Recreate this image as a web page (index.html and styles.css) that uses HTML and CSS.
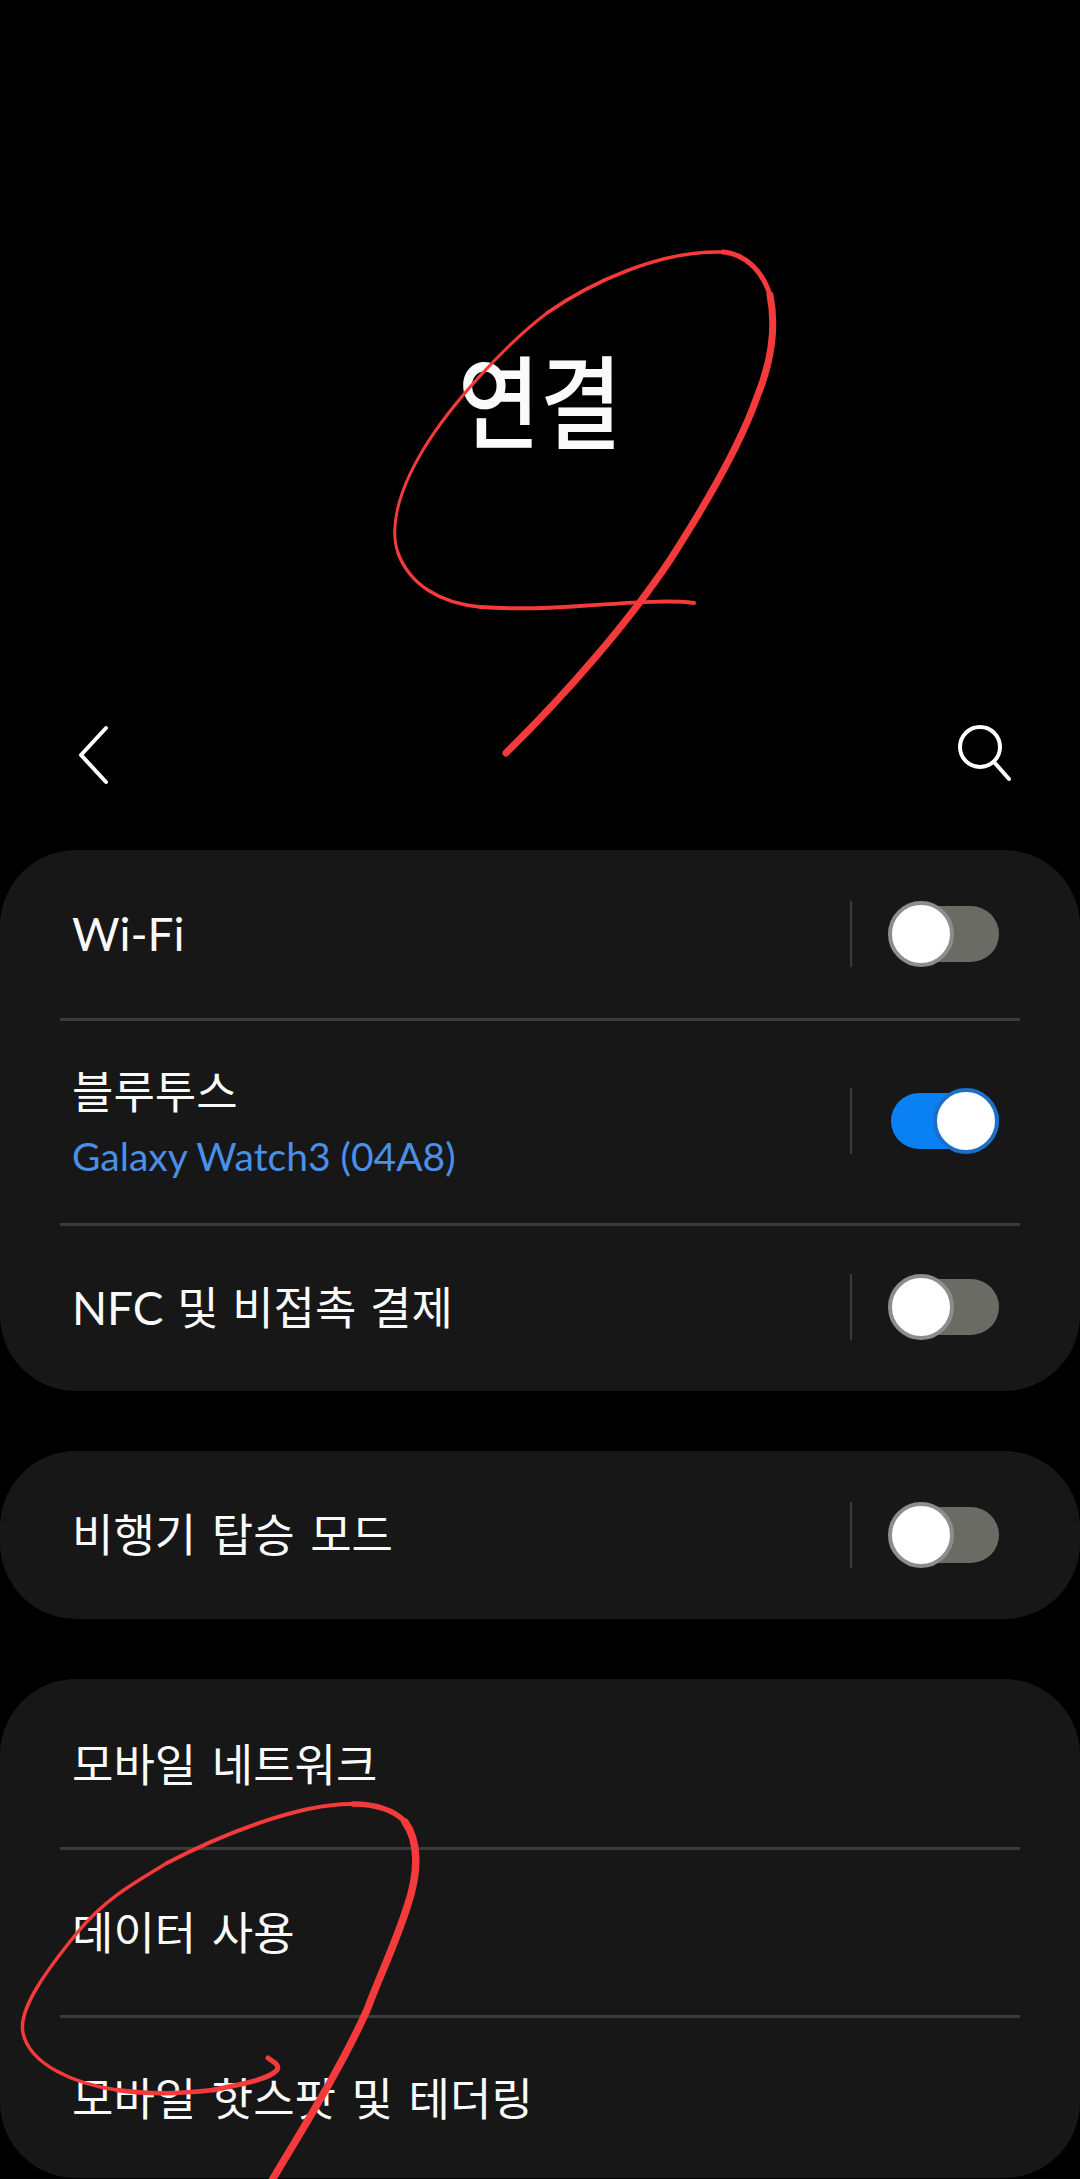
FILE: index.html
```html
<!DOCTYPE html>
<html lang="ko">
<head>
  <meta charset="UTF-8">
  <title>연결</title>
  <link rel="stylesheet" href="styles.css">
</head>
<body>
  <div class="screen">
    <header class="hero">
      <h1>연결</h1>
    </header>

    <nav class="toolbar">
      <svg class="icon" width="40" height="70" viewBox="0 0 40 70">
        <path d="M36 10 L11 37 L36 64" />
      </svg>
      <svg class="icon" width="66" height="66" viewBox="0 0 66 66">
        <circle cx="31" cy="27" r="20" />
        <path d="M45 42 L60 59" />
      </svg>
    </nav>

    <section class="card">
      <div class="row row-first">
        <span class="label latin">Wi-Fi</span>
        <span class="sep"></span>
        <span class="switch"><span class="thumb"></span></span>
      </div>
      <div class="row row-double">
        <div>
          <div class="label">블루투스</div>
          <div class="sub">Galaxy Watch3 (04A8)</div>
        </div>
        <span class="sep"></span>
        <span class="switch on"><span class="thumb"></span></span>
      </div>
      <div class="row row-last">
        <span class="label"><span class="latin">NFC</span> 및 비접촉 결제</span>
        <span class="sep"></span>
        <span class="switch"><span class="thumb"></span></span>
      </div>
    </section>

    <section class="card">
      <div class="row row-single">
        <span class="label">비행기 탑승 모드</span>
        <span class="sep"></span>
        <span class="switch"><span class="thumb"></span></span>
      </div>
    </section>

    <section class="card card-last">
      <div class="row row-first"><span class="label">모바일 네트워크</span></div>
      <div class="row row-mid"><span class="label">데이터 사용</span></div>
      <div class="row row-end"><span class="label">모바일 핫스팟 및 테더링</span></div>
    </section>

    <!-- red pen marks drawn over the screenshot -->
    <svg class="pen" width="1080" height="2179" viewBox="0 0 1080 2179">
      <path stroke-width="4" d="M694 603 C670 600 640 602 580 606 C540 609 510 609 480 607" />
      <path stroke-width="3.5" d="M480 607 C440 603 410 585 398 553" />
      <path stroke-width="3" d="M398 553 C390 530 396 495 423 450 C450 405 505 345 547 313" />
      <path stroke-width="3.5" d="M547 313 C590 283 660 250 723 252" />
      <path stroke-width="5" d="M723 252 C745 254 762 270 770 295" />
      <path stroke-width="7" d="M770 295 C777 330 770 365 757 397 C742 440 715 490 670 560 C630 620 570 690 506 753" />

      <path stroke-width="5" d="M268 2058 C274 2062 280 2065 277 2070 C270 2078 250 2083 213 2090" />
      <path stroke-width="4.5" d="M213 2090 C180 2094 145 2094 117 2090" />
      <path stroke-width="3.5" d="M117 2090 C75 2084 30 2065 23 2033 C18 2010 45 1972 77 1933 C103 1901 130 1885 167 1863" />
      <path stroke-width="4" d="M167 1863 C220 1835 300 1803 353 1804" />
      <path stroke-width="5.5" d="M353 1804 C375 1804 395 1810 405 1822" />
      <path stroke-width="7.5" d="M405 1822 C418 1840 420 1870 407 1907 C395 1945 380 1975 367 2010 C340 2070 300 2133 271 2182" />
    </svg>
  </div>
</body>
</html>
```

FILE: styles.css
```css
html,
body {
  margin: 0;
  background: #000000;
}
.screen {
  position: relative;
  width: 1080px;
  height: 2179px;
  overflow: hidden;
  color: #fafafa;
  font-family: "Noto Sans CJK KR", "Noto Sans", sans-serif;
}
.hero {
  display: flex;
  align-items: center;
  justify-content: center;
  height: 579px;
  padding-top: 108px;
  padding-bottom: 6px;
}
h1 {
  margin: 0;
  font-size: 89px;
  font-weight: 500;
  line-height: 1;
  transform: scaleY(1.14);
}
.toolbar {
  display: flex;
  align-items: center;
  justify-content: space-between;
  height: 120px;
  margin-bottom: 37px;
  padding: 0 65px 0 70px;
}
.icon {
  fill: none;
  stroke: #ffffff;
  stroke-width: 4;
  stroke-linecap: round;
  stroke-linejoin: round;
}
.card {
  margin-bottom: 60px;
  background: #171717;
  border-radius: 76px;
}
.card-last {
  height: 499px;
  margin-bottom: 0;
}
.row {
  display: flex;
  align-items: center;
  padding: 0 81px 0 72px;
  position: relative;
}
.row + .row::before {
  content: "";
  position: absolute;
  top: 0;
  left: 60px;
  right: 60px;
  height: 3px;
  background: #3b3b3b;
}
.row-first {
  height: 168px;
}
.row-double {
  height: 205px;
}
.row-last {
  height: 168px;
}
.row-single {
  height: 168px;
}
.row-mid {
  height: 168px;
}
.row-end {
  height: 163px;
}
.row > :first-child {
  flex: 1;
}
.label {
  font-size: 45px;
  line-height: 56px;
  white-space: nowrap;
  word-spacing: 3px;
}
.row-last .label {
  word-spacing: 1px;
}
.row-single .label {
  margin-bottom: 4px;
}
.latin {
  font-family: "Lato", sans-serif;
  font-size: 46px;
}
.sub {
  margin-top: 14px;
  font-family: "Lato", sans-serif;
  font-size: 39px;
  line-height: 48px;
  color: #4a8fe8;
}
.sep {
  width: 2px;
  height: 66px;
  margin-right: 39px;
  background: #3b3b3b;
}
.switch {
  position: relative;
  width: 108px;
  height: 56px;
  border-radius: 28px;
  background: #6a6b64;
}
.switch.on {
  background: #0a80f5;
}
.thumb {
  position: absolute;
  top: -5px;
  left: -3px;
  width: 58px;
  height: 58px;
  border: 4px solid #8d8d8d;
  border-radius: 50%;
  background: #ffffff;
}
.switch.on .thumb {
  left: auto;
  right: 0;
  border-color: #1a6fc8;
}
.pen {
  position: absolute;
  top: 0;
  left: 0;
  fill: none;
  stroke: #f43a3a;
  stroke-linecap: round;
  stroke-linejoin: round;
}
```
